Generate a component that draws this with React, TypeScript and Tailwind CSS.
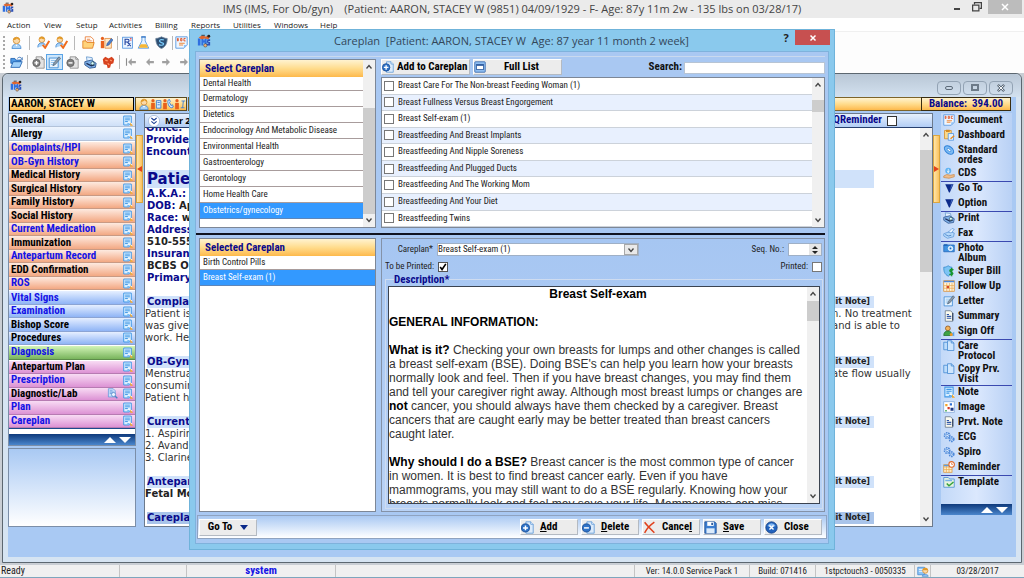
import React from "react";

/* ---------- icons ---------- */

type IconProps = { className?: string };

function Svg({ className = "size-3", children }: IconProps & { children: React.ReactNode }) {
  return (
    <svg viewBox="0 0 16 16" className={"shrink-0 " + className} fill="none" aria-hidden="true">
      {children}
    </svg>
  );
}

const Logo = ({ className }: IconProps) => (
  <Svg className={className}>
    <path d="M1 5h3v8H1zM5 5h2l1 3 1-3h2v8H9V9l-1 2-1-2v4H5z" fill="#2f6fe0" />
    <path d="M12 6h3v2h-2v1h2v4h-4v-2h2v-1h-2z" fill="#2b4fb8" />
    <path d="M2 4c3-3 6-2 8-1l3-2 2 2-2 3-4-1-4 1z" fill="#e0662e" />
    <circle cx="13.5" cy="2.5" r="1.6" fill="#222" />
    <circle cx="9.5" cy="13" r="1.9" fill="#f0b27a" stroke="#333" strokeWidth=".6" />
    <path d="M5 1.5h4" stroke="#333" />
  </Svg>
);

const Person = ({ className }: IconProps) => (
  <Svg className={className}>
    <path d="M2.500 15.500c0-4 2-5.500 5.500-5.500s5.500 1.500 5.500 5.500z" fill="#a9d2f7" stroke="#3f86d0" />
    <circle cx="8" cy="5.500" r="4" fill="#fbd9a8" stroke="#d08a2c" />
    <path d="M3.800 5C4 .5 12 .5 12.200 5 10 4.500 9 3.500 8.500 3 7.500 4.500 6 5 3.800 5z" fill="#e39a26" />
    <path d="M6.500 10.500 8 13l1.500-2.500z" fill="#fff" />
  </Svg>
);

const PersonCheck = ({ className }: IconProps) => (
  <Svg className={className}>
    <circle cx="6" cy="4.500" r="3.500" fill="#fbd9a8" stroke="#d08a2c" />
    <path d="M2.700 4C3 0 9 0 9.300 4 7 4 6 3 6 3z" fill="#e39a26" />
    <path d="M1 14c0-4 2-5.500 5-5.500s4 1.500 4 3" fill="#a9d2f7" stroke="#3f86d0" />
    <path d="m7 11 3 3.500L15 6" stroke="#ef6c1d" strokeWidth="2.400" />
  </Svg>
);

const Folder = ({ className }: IconProps) => (
  <Svg className={className}>
    <path d="M4 1h7l3 3v7H4z" fill="#fff" stroke="#e8752a" />
    <path d="M6 4h4M6 6h6" stroke="#e8752a" />
    <path d="M1 6h4l1 2h9l-2 7H1z" fill="#ffd37a" stroke="#e07a1c" />
  </Svg>
);

const BlueFolder = ({ className }: IconProps) => (
  <Svg className={className}>
    <path d="M1 3h5l1 2h6v4H1z" fill="#4f9ae6" stroke="#1d5fae" />
    <path d="M1 14 4 7h11l-3 7z" fill="#9fd0fa" stroke="#1d5fae" />
    <path d="M9 3c2-2 4-2 5 0l1-1v3h-3" stroke="#1d5fae" />
  </Svg>
);

const EditOrange = ({ className }: IconProps) => (
  <Svg className={className}>
    <circle cx="3" cy="3" r="2" fill="#e8601c" />
    <path d="M1 6h4v9H1z" fill="#e8601c" />
    <path d="M6 3h8v12H6z" fill="#ffe9c9" stroke="#e08a3c" />
    <path d="m8 12 1-3 5-6 2 2-5 6z" fill="#4d7fc9" stroke="#274f94" strokeWidth=".7" />
  </Svg>
);

const Rx = ({ className }: IconProps) => (
  <Svg className={className}>
    <rect x="2" y="1.500" width="12" height="13.500" fill="#eaf4ff" stroke="#4a8fdd" />
    <path d="M5 11V4h3c2.500 0 2.500 3.500 0 3.500H5M8 7.500l4 5M11.500 9 8 12.500" stroke="#1f3f9c" strokeWidth="1.300" />
    <path d="M11 3h2M11 5h2" stroke="#d33" />
  </Svg>
);

const Flask = ({ className }: IconProps) => (
  <Svg className={className}>
    <path d="M6 1h4v5l4.500 9h-13L6 6z" fill="#e6f3ff" stroke="#4a8fdd" />
    <path d="M4.500 10h7l2.300 4.500H2.200z" fill="#f7b733" />
    <path d="M5 1.200h6" stroke="#2f6fbf" strokeWidth="1.400" />
  </Svg>
);

const Shield = ({ className }: IconProps) => (
  <Svg className={className}>
    <path d="M1 3c3 0 5-1 7-2 2 1 4 2 7 2 0 6-2 10-7 12.500C3 13 1 9 1 3z" fill="#2d4f74" stroke="#6c8299" />
    <path d="M11 5C8 3.500 4.500 5 6 7s5 1 4.500 3S6 11.500 5 10.500" stroke="#7fd0ff" strokeWidth="1.500" />
  </Svg>
);

const DocIcon = ({ className }: IconProps) => (
  <Svg className={className}>
    <path d="M1 1h14v10l-4 4H1z" fill="#eef6ff" stroke="#4a8fdd" />
    <path d="M15 11h-4v4z" fill="#8fc0f5" />
    <path d="M3 3v3M3 3h1v3H3M7 3v3M7 3h1.500v3H7M13 3h-2v3h2" stroke="#e0552a" strokeWidth="1.200" />
    <path d="M5 9h7M5 11h5" stroke="#f08a3c" strokeWidth="1.300" />
  </Svg>
);

const NoteIcon = ({ className }: IconProps) => (
  <Svg className={className}>
    <path d="M2.500 1.500h11v10l-3 3h-8z" fill="#d9efff" stroke="#3f97e6" strokeWidth="1.400" />
    <path d="M4.500 4.500h7M4.500 7h7M4.500 9.500h4" stroke="#3f97e6" strokeWidth="1.400" />
    <path d="m9 12 5.500 1.500" stroke="#fff" strokeWidth="3" />
    <path d="M8 12.500 13 14" stroke="#54a7ee" strokeWidth="1.800" />
    <path d="M12 11 16 15.500h-4z" fill="#f4a728" />
  </Svg>
);

const DocSearch = ({ className }: IconProps) => (
  <Svg className={className}>
    <path d="M2 1h7l3 3v9H2z" fill="#c6defa" stroke="#5b92d6" />
    <path d="M4 4h4M4 6h6M4 8h3" stroke="#5b92d6" />
    <circle cx="9.500" cy="9.500" r="3" fill="#e9f4ff" stroke="#4a7fc4" />
    <path d="m12 12 3 3" stroke="#4a7fc4" strokeWidth="2" />
  </Svg>
);

const GrayDoc = ({ className, plus }: IconProps & { plus?: boolean }) => (
  <Svg className={className}>
    <path d="M5 1h7l3 3v11H5z" fill="#e3e3e3" stroke="#8a8a8a" />
    <path d="M12 1v3h3" stroke="#8a8a8a" />
    <circle cx="5.500" cy="8.500" r="4.500" fill="#7e7e7e" stroke="#5f5f5f" />
    <path d={plus ? "M3 8.500h5M5.500 6v5" : "M3 8.500h5"} stroke="#fff" strokeWidth="1.700" />
  </Svg>
);

const EditBlue = ({ className }: IconProps) => (
  <Svg className={className}>
    <path d="M1.500 2.500h11v12h-11z" fill="#eaf5ff" stroke="#2f82d2" />
    <path d="M3.500 5.500h6M3.500 8h4M3.500 10.500h3" stroke="#7bb6ea" />
    <path d="m6 12 1.200-3.500L13.500 1l2 2L9 10.500z" fill="#8b9aaa" stroke="#3f5870" strokeWidth=".8" />
  </Svg>
);

const Printer = ({ className }: IconProps) => (
  <Svg className={className}>
    <path d="m3 1 7 1 1 5-7 1z" fill="#e4f1ff" stroke="#6699cc" />
    <path d="m1 7 8-2 6 4-1 5-7 1-6-4z" fill="#7fb0e8" stroke="#284f88" />
    <path d="m3 9 6 3 4-1" stroke="#1d2f57" strokeWidth="1.600" />
    <circle cx="10.500" cy="9" r="2" fill="#dff" stroke="#244" strokeWidth=".8" />
  </Svg>
);

const Fax = ({ className }: IconProps) => (
  <Svg className={className}>
    <path d="m1 9 8-3 6 2-1 5-8 2-5-3z" fill="#b7dafb" stroke="#5b96d8" />
    <path d="m7 7 5-5 3 1-4 5z" fill="#eef7ff" stroke="#5b96d8" />
    <path d="m3 10 4 2 4-1" stroke="#3974bd" />
  </Svg>
);

const RedMark = ({ className }: IconProps) => (
  <Svg className={className}>
    <path d="M1 4 4 1l4 2 4-2 3 3-1 5-3 1-1 4-3 1-1-4-4-1z" fill="#d7431f" />
    <path d="m4 5 3 1M10 5l2 1M7 9l2 2" stroke="#ff9a70" strokeWidth="1.500" />
  </Svg>
);

const GrayArrow = ({ className, bar, flip }: IconProps & { bar?: boolean; flip?: boolean }) => (
  <Svg className={className}>
    <g transform={flip ? "matrix(-1 0 0 1 16 0)" : undefined}>
      <path d="M4 8 9 3v3.500h5.500v3H9V13z" fill="#a0a0a0" />
      {bar && <path d="M2 3v10" stroke="#8d8d8d" strokeWidth="1.500" />}
    </g>
  </Svg>
);

const Clipboard = ({ className }: IconProps) => (
  <Svg className={className}>
    <path d="M2 2h9v11H2z" fill="#fbd98a" stroke="#d58a20" />
    <path d="M7 6h7v9H7z" fill="#e3f1ff" stroke="#4a8fdd" />
    <path d="M4 1h5v3H4z" fill="#d58a20" />
    <path d="m10 13 5-4" stroke="#e88a20" strokeWidth="2" />
  </Svg>
);

const Ring = ({ className }: IconProps) => (
  <Svg className={className}>
    <ellipse cx="8" cy="8" rx="7" ry="4.500" transform="rotate(40 8 8)" fill="#7dbcf5" stroke="#3585da" strokeWidth="1.600" />
    <ellipse cx="8" cy="8" rx="3" ry="1.500" transform="rotate(40 8 8)" fill="#fff" stroke="#3585da" />
  </Svg>
);

const Cds = ({ className }: IconProps) => (
  <Svg className={className}>
    <circle cx="7" cy="5" r="4" fill="#5eb2f2" />
    <path d="M7 2.500v5M5.500 5 7 7.500 8.500 5" stroke="#fff" />
    <path d="m1 12 4-2 5 1 5-1v3l-7 2-7-1z" fill="#eebd8b" stroke="#c98b50" />
  </Svg>
);

const DownTri = ({ className }: IconProps) => (
  <Svg className={className}>
    <path d="M3 3h11L9 14H8z" fill="#0b2a8a" />
    <path d="M11 4h2l-4 8z" fill="#4468bd" />
  </Svg>
);

const Camera = ({ className }: IconProps) => (
  <Svg className={className}>
    <path d="M1 4h14v9H1z" fill="#3f93e2" stroke="#1f63b5" />
    <path d="M1 3h5v2H1z" fill="#1f63b5" />
    <circle cx="10" cy="8.500" r="3" fill="#cde8ff" stroke="#fff" />
    <circle cx="10" cy="8.500" r="1.200" fill="#1f63b5" />
  </Svg>
);

const SuperBill = ({ className }: IconProps) => (
  <Svg className={className}>
    <path d="M1 3c3 0 4-1 6-2 1 1 3 2 5 2 0 6-1 9-5 12-5-3-6-6-6-12z" fill="#7cc4f4" stroke="#2f86c8" />
    <path d="M14 6.500c-5-2-6 2-3 3s3 4-2.500 3M11.500 4v11" stroke="#17952f" strokeWidth="2" />
  </Svg>
);

const CalendarGrid = ({ className }: IconProps) => (
  <Svg className={className}>
    <rect x="1" y="1" width="14" height="14" fill="#fff4dc" stroke="#d98a2b" />
    <path d="M1 1h14v2H1z" fill="#4a86d8" />
    <path d="M1 7.500h14M1 11h14M5 4v11M8.500 4v11M12 4v11" stroke="#eaa850" />
    <path d="M5 8h3v3H5z" fill="#d4442a" />
  </Svg>
);

const SummaryIcon = ({ className }: IconProps) => (
  <Svg className={className}>
    <path d="M3 1h7l3 3v11H3z" fill="#fbfbef" stroke="#5f6f80" />
    <path d="M5 6h3M5 8.500h6M5 11h6" stroke="#2e55a8" strokeWidth="1.400" />
    <path d="M13 4v10" stroke="#2c3b55" strokeWidth="1.500" />
  </Svg>
);

const SignOff = ({ className }: IconProps) => (
  <Svg className={className}>
    <circle cx="6.500" cy="4.500" r="3.200" fill="#f2b35c" stroke="#8a4f14" />
    <path d="M1 14c0-4 2-6 5.500-6S12 10 12 14z" fill="#3fa345" stroke="#1d6f2a" />
    <path d="m9 13 6-4v6z" fill="#5aa7f0" />
    <circle cx="11" cy="12.500" r="2" fill="#f39a26" />
  </Svg>
);

const CopyIcon = ({ className }: IconProps) => (
  <Svg className={className}>
    <path d="M1 3h4l2 2v8H1z" fill="#bcdcfb" stroke="#3f86d0" />
    <path d="M6 1h5l3.500 3v10H6z" fill="#cfe6fd" stroke="#3f86d0" />
    <path d="M11 1v3h3.500" stroke="#3f86d0" />
  </Svg>
);

const ImageIcon = ({ className }: IconProps) => (
  <Svg className={className}>
    <rect x="1" y="1" width="14" height="14" fill="#fff" stroke="#7fa6d8" />
    <path d="M3 4h3v3H3z" fill="#f4a428" />
    <path d="M9 3h3v3H9z" fill="#2e6fd4" />
    <path d="M6 8h3v3H6z" fill="#d43a2a" />
    <path d="M10 9h4v4h-4z" fill="#1f3a86" />
    <path d="M3 12h2v2H3z" fill="#3aa545" />
  </Svg>
);

const Gears = ({ className }: IconProps) => (
  <Svg className={className}>
    <circle cx="5.500" cy="6" r="3.600" fill="#cfe4fb" stroke="#4a86d8" strokeWidth="2" strokeDasharray="2 1" />
    <circle cx="5.500" cy="6" r="1.500" fill="#fff" stroke="#4a86d8" />
    <circle cx="11.500" cy="11" r="3" fill="#cfe4fb" stroke="#4a86d8" strokeWidth="2" strokeDasharray="2 1" />
    <circle cx="11.500" cy="11" r="1.200" fill="#fff" stroke="#4a86d8" />
  </Svg>
);

const ReminderIcon = ({ className }: IconProps) => (
  <Svg className={className}>
    <rect x="1" y="5" width="11" height="10" fill="#fff2d0" stroke="#e0952e" />
    <path d="M1 8h11M1 11.500h11M4.500 5v10M8 5v10" stroke="#eaa850" />
    <path d="M1 5h8v2H1z" fill="#5a9ae0" />
    <circle cx="11.500" cy="4.500" r="3.700" fill="#fff" stroke="#e2692a" strokeWidth="1.400" />
    <path d="M11.500 2.500v2h1.800" stroke="#e2692a" />
  </Svg>
);

const TemplateIcon = ({ className }: IconProps) => (
  <Svg className={className}>
    <path d="M1 2h6l2 2h6v11H1z" fill="#e6f3df" stroke="#3f86d0" />
    <path d="M3 6h9" stroke="#76b2e8" strokeWidth="2" />
    <path d="m5 10 3 3 6-5" stroke="#36a23c" strokeWidth="2" />
  </Svg>
);

const PageBadge = ({ className, plus }: IconProps & { plus?: boolean }) => (
  <Svg className={className}>
    <path d="M6 1h6l3 3v11H6z" fill="#dcebfb" stroke="#5a96d6" />
    <path d="M12 1v3h3" fill="#fff" stroke="#5a96d6" />
    <circle cx="5.500" cy="8.500" r="5" fill="#2f73c8" stroke="#174a91" />
    <path d={plus ? "M2.500 8.500h6M5.500 5.500v6" : "M2.500 8.500h6"} stroke="#fff" strokeWidth="1.800" />
  </Svg>
);

const WindowIcon = ({ className }: IconProps) => (
  <Svg className={className}>
    <rect x="1" y="1" width="14" height="14" rx="1" fill="#8fbdf0" stroke="#2a5fa8" />
    <rect x="3.500" y="4.500" width="9" height="7" fill="#fff" stroke="#1f4f96" />
    <path d="M3.500 5.500h9" stroke="#1f4f96" strokeWidth="1.800" />
  </Svg>
);

const RedX = ({ className }: IconProps) => (
  <Svg className={className}>
    <path d="M2 1.500c3 4 7 8 12 13M14 1.500C9 5 5 9 2 14.500" stroke="#e0401c" strokeWidth="1.800" />
  </Svg>
);

const Disk = ({ className }: IconProps) => (
  <Svg className={className}>
    <path d="M1 1h12l2 2v12H1z" fill="#3b7dd0" stroke="#1f4f96" />
    <path d="M4 1h8v5H4z" fill="#fff" />
    <path d="M3 9h10v6H3z" fill="#dcebfb" />
    <path d="M9 2h2v3H9z" fill="#1f4f96" />
  </Svg>
);

const CloseBall = ({ className }: IconProps) => (
  <Svg className={className}>
    <circle cx="8" cy="8" r="7" fill="#2263bd" stroke="#143f85" />
    <path d="M3 6a5.500 5.500 0 0 1 10 0c-3 1.500-7 1.500-10 0z" fill="#82b6f0" />
    <path d="m5.500 5.500 5 5M10.500 5.500l-5 5" stroke="#fff" strokeWidth="1.800" />
  </Svg>
);

const UserCard = ({ className }: IconProps) => (
  <Svg className={className}>
    <path d="M1 3h9v10H1z" fill="#8fc4f6" stroke="#3f86d0" />
    <path d="M2.500 6h6M2.500 8.500h6" stroke="#fff" />
    <circle cx="11" cy="7.500" r="3.500" fill="#fbd9a8" stroke="#d08a2c" />
    <path d="M7.500 7C8 3 14 3 14.500 7z" fill="#e39a26" />
    <path d="M7 15c0-3 8-3 8 0z" fill="#a9d2f7" stroke="#3f86d0" />
  </Svg>
);

const ContactIcon = ({ className, mark }: IconProps & { mark: string }) => (
  <Svg className={className}>
    <circle cx="4" cy="3.500" r="2.200" fill="#e8601c" />
    <path d="M1.500 6.500h5V15h-5z" fill="#e8601c" />
    <path d={mark} fill="#d6ebff" stroke="#3f7fd0" strokeWidth="1.200" />
  </Svg>
);

const Chevron = ({ up, className = "size-2" }: IconProps & { up?: boolean }) => (
  <Svg className={className}>
    <path d={up ? "m3 11 5-6 5 6" : "m3 5 5 6 5-6"} stroke="#444" strokeWidth="2.600" />
  </Svg>
);

const PagerBar = () => (
  <div className="flex h-[11px] items-center justify-end gap-[3px] bg-linear-to-b from-[#0f3a7c] to-[#4a86cc] pr-1">
    <button aria-label="Scroll up" className="flex">
      <svg viewBox="0 0 12 6" className="h-1.5 w-3"><path d="M6 0 12 6H0z" fill="#fff" /></svg>
    </button>
    <button aria-label="Scroll down" className="flex">
      <svg viewBox="0 0 12 6" className="h-1.5 w-3"><path d="M0 0h12L6 6z" fill="#fff" /></svg>
    </button>
  </div>
);

/* ---------- shared pieces ---------- */

function ScrollBar({ thumb }: { thumb: string }) {
  return (
    <div className="flex w-3 shrink-0 flex-col items-center bg-[#f0f0f0]">
      <span className="flex h-3.5 items-center"><Chevron up /></span>
      <div className="w-full flex-1">
        <div className={"w-full bg-[#cdcdcd] " + thumb} />
      </div>
      <span className="flex h-3.5 items-center"><Chevron /></span>
    </div>
  );
}

const gold = "bg-linear-to-b from-[#fff3d0] via-[#ffdc8c] to-[#fdb94a]";
const btn = "flex items-center border border-[#b4bac2] border-t-white border-l-white bg-[#ececec] font-bold text-black text-[11px] whitespace-nowrap";

/* ---------- background window ---------- */

const menus: [string, string][] = [
  ["Action", "w-[37px]"], ["View", "w-8"], ["Setup", "w-[33px]"], ["Activities", "w-[46px]"], ["Billing", "w-9"],
  ["Reports", "w-[42px]"], ["Utilities", "w-[41px]"], ["Windows", "w-[46px]"], ["Help", "w-7"],
];

const Sep = ({ tight }: { tight?: boolean }) => <span className={"h-3.5 w-px bg-[#b8b8b8] " + (tight ? "mx-0.5" : "mx-1")} />;
const Grip = () => <span className="mr-0.5 h-3.5 border-l-2 border-dotted border-[#a8a8a8]" />;

const tone = {
  pale: "from-[#eef5fe] to-[#cfe0f8] border-[#b3c3da]",
  orange: "from-[#fdeae0] to-[#f2a883] border-[#c99a84]",
  blue: "from-[#e6efff] to-[#8fb4f5] border-[#8ba4d4]",
  green: "from-[#d3f5b8] to-[#78b45c] border-[#5d8c4a]",
  pink: "from-[#f8dcf4] to-[#dc92d4] border-[#b77bb2]",
};

type Tone = keyof typeof tone;
const chart: { label: string; t: Tone; link?: boolean; first?: boolean; extra?: boolean }[] = [
  { label: "General", t: "pale" },
  { label: "Allergy", t: "pale" },
  { label: "Complaints/HPI", t: "orange", link: true, first: true },
  { label: "OB-Gyn History", t: "orange", link: true },
  { label: "Medical History", t: "orange" },
  { label: "Surgical History", t: "orange" },
  { label: "Family History", t: "orange" },
  { label: "Social History", t: "orange" },
  { label: "Current Medication", t: "orange", link: true },
  { label: "Immunization", t: "orange" },
  { label: "Antepartum Record", t: "orange", link: true },
  { label: "EDD Confirmation", t: "orange" },
  { label: "ROS", t: "orange", link: true },
  { label: "Vital Signs", t: "blue", link: true, first: true },
  { label: "Examination", t: "blue", link: true },
  { label: "Bishop Score", t: "blue" },
  { label: "Procedures", t: "blue" },
  { label: "Diagnosis", t: "green", link: true, first: true },
  { label: "Antepartum Plan", t: "pink", first: true },
  { label: "Prescription", t: "pink", link: true },
  { label: "Diagnostic/Lab", t: "pink", extra: true },
  { label: "Plan", t: "pink", link: true },
  { label: "Careplan", t: "pink", link: true },
];

const tools: { label: string; Icon: React.FC<IconProps>; line?: boolean; tall?: boolean }[] = [
  { label: "Document", Icon: DocIcon },
  { label: "Dashboard", Icon: Clipboard },
  { label: "Standard ordes", Icon: Ring, tall: true },
  { label: "CDS", Icon: Cds },
  { label: "Go To", Icon: DownTri, line: true },
  { label: "Option", Icon: DownTri },
  { label: "Print", Icon: Printer, line: true },
  { label: "Fax", Icon: Fax },
  { label: "Photo Album", Icon: Camera, line: true, tall: true },
  { label: "Super Bill", Icon: SuperBill },
  { label: "Follow Up", Icon: CalendarGrid },
  { label: "Letter", Icon: EditBlue },
  { label: "Summary", Icon: SummaryIcon },
  { label: "Sign Off", Icon: SignOff },
  { label: "Care Protocol", Icon: CopyIcon, line: true, tall: true },
  { label: "Copy Prv. Visit", Icon: CopyIcon, tall: true },
  { label: "Note", Icon: NoteIcon, line: true },
  { label: "Image", Icon: ImageIcon },
  { label: "Prvt. Note", Icon: SummaryIcon },
  { label: "ECG", Icon: Gears },
  { label: "Spiro", Icon: Gears },
  { label: "Reminder", Icon: ReminderIcon },
  { label: "Template", Icon: TemplateIcon, line: true },
];

function SplitTab({ right }: { right?: boolean }) {
  return (
    <div className="w-2 shrink-0 pt-[22px]">
      <button
        aria-label={right ? "Collapse tools" : "Collapse chart"}
        className="flex h-[68px] w-[7px] items-center border border-[#dba640] bg-linear-to-r from-[#ffe6a8] to-[#fbc25c]"
      >
        <svg viewBox="0 0 5 6" className="h-1.5 w-[5px]">
          <path d={right ? "M0 0 5 3 0 6z" : "M5 0 0 3l5 3z"} fill="#e2431c" />
        </svg>
      </button>
    </div>
  );
}

function Band({ children, active }: { children: string; active?: boolean }) {
  return (
    <div className={"mr-[46px] ml-0.5 flex h-3 items-center justify-between pr-1 " + (active ? "bg-[#a9c4ea]" : "bg-[#d0e2fa]")}>
      <h3 className="font-bold text-[#0a0a8c]">{children}</h3>
      <button className="text-[8px] font-bold text-[#222]">[Edit Note]</button>
    </div>
  );
}

function Line({ left, right = "" }: { left: string; right?: string }) {
  return (
    <div className="flex h-3 whitespace-nowrap">
      <p className="flex-1">{left}</p>
      <p className="w-[88px]">{right}</p>
    </div>
  );
}

function ChartDocument() {
  const key = "font-bold text-[#0a0a8c]";
  return (
    <div className="-mt-1.5 flex-1 font-['DejaVu_Sans','Liberation_Sans',sans-serif] text-[10px] leading-3 font-normal text-[#333]">
      <div className="pl-px">
        <p className={key}>Office:</p>
        <p className={key}>Provider:</p>
        <p className={key}>Encounter:</p>
      </div>
      <h2 className="mt-3 mr-[46px] ml-0.5 h-[18px] bg-[#d0e2fa] text-[15px] leading-[18px] font-bold text-[#0a0a8c]">Patient</h2>
      <div className="pl-0.5 font-bold text-[#222]">
        <p><span className={key}>A.K.A.:</span> L</p>
        <p><span className={key}>DOB:</span> Apr</p>
        <p><span className={key}>Race:</span> white</p>
        <p className={key}>Address:</p>
        <p>510-555</p>
        <p className={key}>Insurance:</p>
        <p>BCBS OF</p>
        <p className={key}>Primary</p>
      </div>
      <div className="mt-3">
        <Band>Complaints</Band>
        <Line left="Patient is" right="n. No treatment" />
        <Line left="was given" right="and is able to" />
        <Line left="work. Her" />
      </div>
      <div className="mt-3">
        <Band>OB-Gyn</Band>
        <Line left="Menstrual" right="ate flow usually" />
        <Line left="consuming" />
        <Line left="Patient has" />
      </div>
      <div className="mt-3">
        <Band>Current</Band>
        <Line left="1. Aspirin" />
        <Line left="2. Avandia" />
        <Line left="3. Clarinex" />
      </div>
      <div className="mt-3">
        <Band>Antepartum</Band>
        <p className="font-bold text-[#222]">Fetal Mov</p>
      </div>
      <div className="mt-3">
        <Band active>Careplan</Band>
      </div>
    </div>
  );
}

function PatientWindow() {
  return (
    <section className="mx-0.5 flex flex-1 flex-col rounded-t-md border border-[#5c6770] bg-[#d6e4f2] px-[5px] pb-[5px]">
      <div className="-mx-[5px] flex h-[23px] items-center justify-between rounded-t-md bg-linear-to-b from-[#b9c7d6] to-[#d3e1ef] pr-2 pl-[7px]">
        <Logo className="size-3" />
        <div className="flex gap-0.5 pt-1">
          <button aria-label="Minimize chart" className="flex h-3.5 w-6 items-center justify-center rounded-sm border border-[#93a3b4]">
            <span className="h-1 w-2 rounded-sm border border-[#5d6b79]" />
          </button>
          <button aria-label="Restore chart" className="flex h-3.5 w-6 items-center justify-center rounded-sm border border-[#93a3b4]">
            <span className="h-[7px] w-2 border-2 border-[#6d7b89]" />
          </button>
          <button aria-label="Close chart" className="flex h-3.5 w-6 items-center justify-center rounded-sm border border-[#93a3b4]">
            <Svg className="size-2.5"><path d="m3 3 10 10M13 3 3 13" stroke="#5d6b79" strokeWidth="4" /><path d="m4 4 8 8M12 4l-8 8" stroke="#fff" strokeWidth="1.500" /></Svg>
          </button>
        </div>
      </div>

      <div className="flex flex-1 flex-col bg-[#a9c9f3] text-[11px] font-bold">
        <div className="flex h-3.5 pr-[5px] pl-px">
          <div className={"w-[125px] border border-black pl-px leading-[11px] text-black " + gold}>AARON, STACEY W</div>
          <div className={"ml-px flex w-[52px] items-center justify-between border border-[#5a4a20] px-0.5 " + gold}>
            <Person className="size-3" />
            <ContactIcon className="size-3" mark="M8.500 3.500h6v10h-6zM10 6h3M10 9h3" />
            <ContactIcon className="size-3" mark="M8 3l2-1 1 3-1 1 2 4 2-1 1 3-2 1C9 13 7 6 8 3z" />
            <ContactIcon className="size-3" mark="M10 4h5M12.500 4l-1 9M9 13h5" />
          </div>
          <div className={"ml-px flex-1 border border-r-0 border-[#7d642a] " + gold} />
          <div className={"w-[90px] border border-[#3a2d10] text-center leading-[11px] whitespace-pre text-[#0a0a8c] " + gold}>{"Balance:  394.00"}</div>
        </div>

        <div className="mt-0.5 flex flex-1 pr-1 pb-[30px]">
          <aside className="flex w-32 shrink-0 flex-col">
            <nav className="flex flex-col border border-[#7b8ea8] bg-white">
              <ul className="flex h-[314px] flex-col">
                {chart.map(({ label, t, link, first, extra }) => (
                  <li key={label} className={"flex min-h-0 flex-1 border-b bg-linear-to-b " + tone[t] + (first ? " mt-px" : "")}>
                    <button className={"flex w-full items-center gap-1 pr-0.5 pl-0.5 text-left leading-3 " + (link ? "text-[#1414e6]" : "text-black")}>
                      <span className="flex-1">{label}</span>
                      {extra && <DocSearch className="size-[11px]" />}
                      <NoteIcon className="size-[11px]" />
                    </button>
                  </li>
                ))}
              </ul>
              <div className="h-1.5 border-t border-[#1d4a8c]" />
              <PagerBar />
            </nav>
            <div className="mt-0.5 min-h-[78px] flex-1 border border-[#7b8ea8] bg-linear-to-b from-[#a9c9f3] to-white" />
          </aside>

          <SplitTab />

          <main className="flex min-w-0 flex-1 flex-col border border-[#6c7a8c] bg-white">
            <header className="z-0 flex h-[13px] items-center gap-[5px] bg-linear-to-b from-[#e6f0fd] to-[#b2cdf5] pl-[3px] shadow-[0_1px_0_#27406f]">
              <Svg className="size-3">
                <circle cx="8" cy="8" r="7.500" fill="#fff" stroke="#9db6d8" />
                <path d="m4.500 4 3.500 3 3.500-3M4.500 8.500 8 11.500l3.500-3" stroke="#1b3f94" strokeWidth="1.500" />
              </Svg>
              <span className="flex-1 font-['Open_Sans','Liberation_Sans',sans-serif] text-[9px] whitespace-nowrap text-black">Mar 28</span>
              <label className="mr-[35px] flex items-center gap-[5px] text-[#0a0a8c]">
                QReminder
                <input type="checkbox" className="size-2.5 appearance-none border border-[#333] bg-white" />
              </label>
            </header>
            <div className="mt-px flex h-[397px] flex-auto overflow-hidden">
              <ChartDocument />
              <ScrollBar thumb="mt-2 h-[122px]" />
            </div>
          </main>

          <SplitTab right />

          <aside className="flex w-[71px] shrink-0 flex-col self-start bg-linear-to-r from-[#c3d9f8] via-[#dbe8fd] to-[#b9d1f5]">
            <ul className="pb-[14px]">
              {tools.map(({ label, Icon, line, tall }) => (
                <li key={label} className={(tall ? "h-[23px]" : "h-[15px]") + " border-t " + (line ? "border-[#3a49b0]" : "border-transparent")}>
                  <button className={"flex w-full items-start gap-[3px] pl-0.5 text-left leading-[10px] text-[#111]" + (tall ? "" : " whitespace-nowrap")}>
                    <Icon className="size-3" />
                    <span className="flex-1 pt-px">{label}</span>
                  </button>
                </li>
              ))}
            </ul>
            <PagerBar />
          </aside>
        </div>
      </div>
    </section>
  );
}

/* ---------- careplan dialog ---------- */

const categories = [
  "Dental Health", "Dermatology", "Dietetics", "Endocrinology And Metabolic Disease", "Environmental Health",
  "Gastroenterology", "Gerontology", "Home Health Care", "Obstetrics/gynecology",
];

const plans = [
  "Breast Care For The Non-breast Feeding Woman (1)", "Breast Fullness Versus Breast Engorgement", "Breast Self-exam (1)",
  "Breastfeeding And Breast Implants", "Breastfeeding And Nipple Soreness", "Breastfeeding And Plugged Ducts",
  "Breastfeeding And The Working Mom", "Breastfeeding And Your Diet", "Breastfeeding Twins",
];

function ListRow({ label, active, first }: { label: string; active?: boolean; first?: boolean }) {
  return (
    <li>
      <button
        className={
          "flex w-full items-center border-b pl-[3px] text-left whitespace-nowrap " +
          (first ? "h-3.5 " : "h-4 ") +
          (active ? "border-[#5f86b8] bg-[#3399ff] text-white" : "border-[#a89c9c] text-[#222]")
        }
      >
        {label}
      </button>
    </li>
  );
}

const GoldHeader = ({ children }: { children: string }) => (
  <h2 className={"h-[17px] pl-[5px] text-[11px] leading-[17px] font-bold text-[#0a0a8c] " + gold}>{children}</h2>
);

function CareplanDialog() {
  const action = btn + " h-4 w-[58px] gap-1.5";
  return (
    <div
      role="dialog"
      aria-label="Careplan"
      className="absolute inset-x-0 top-[29px] mx-auto w-[646px] border border-[#6fb3da] bg-[#8ac9ed] px-[5px] pb-[5px] text-[9px] text-[#222]"
    >
      <div className="-mr-px flex h-[21px] items-start">
        <Logo className="mt-1 ml-0.5 size-3.5" />
        <h1 className="flex-1 pl-[35px] text-center font-['Open_Sans','Noto_Sans',sans-serif] text-[11px] leading-[22px] whitespace-pre text-[#33475a]">
          {"Careplan  [Patient: AARON, STACEY W  Age: 87 year 11 month 2 week]"}
        </h1>
        <button aria-label="Help" className="w-[18px] font-['Open_Sans',sans-serif] text-[11px] leading-4 font-bold text-[#222]">?</button>
        <button aria-label="Close dialog" className="flex h-[15px] w-[35px] items-center justify-center bg-[#c75050]">
          <Svg className="size-2"><path d="m3 3 10 10M13 3 3 13" stroke="#fff" strokeWidth="3" /></Svg>
        </button>
      </div>

      <div className="border border-[#7fb2dc] bg-[#a9c8f2] px-[3px] pb-1">
        <div className="mt-1 border-t border-[#c9d9ee] pt-0.5">
          <div className="flex gap-[5px]">
            <div className="flex h-[169px] w-[177px] shrink-0 border border-[#7d8796] bg-white">
              <div className="min-w-0 flex-1">
                <GoldHeader>Select Careplan</GoldHeader>
                <ul>
                  {categories.map((c, i) => (
                    <ListRow key={c} label={c} first={i === 0} active={i === categories.length - 1} />
                  ))}
                </ul>
              </div>
              <ScrollBar thumb="mt-[34px] h-[106px]" />
            </div>

            <div className="flex min-w-0 flex-1 flex-col">
              <div className="flex h-[18px] items-start gap-[3px]">
                <button className={btn + " h-4 w-[89px] gap-[3px]"}>
                  <PageBadge plus className="size-3" /> Add to Careplan
                </button>
                <button className={btn + " h-4 w-[89px]"}>
                  <WindowIcon className="size-3" /> <span className="flex-1 pr-1 text-center">Full List</span>
                </button>
                <label className="ml-auto flex items-center gap-0.5 text-[11px] leading-4 font-bold text-[#111]">
                  Search:
                  <input type="text" className="mt-0.5 h-3 w-[141px] border border-[#b7c4d4] bg-white px-1 text-[9px] font-normal" />
                </label>
              </div>
              <div className="flex h-[151px] border border-[#7d8796] bg-white">
                <ul className="flex flex-1 flex-col">
                  {plans.map((p, i) => (
                    <li key={p} className={"flex min-h-0 flex-1 border-b border-[#ccd2da] " + (i % 2 ? "bg-[#e8f0fe]" : "bg-white")}>
                      <label className="flex flex-1 items-center gap-1 pl-0.5">
                        <input type="checkbox" className="size-2.5 appearance-none border border-[#777] bg-white" />
                        {p}
                      </label>
                    </li>
                  ))}
                </ul>
                <ScrollBar thumb="mt-2 h-3" />
              </div>
            </div>
          </div>
        </div>

        <div className="-ml-[3px] mt-[5px] h-0.5 bg-[#10131f]" />

        <div className="mt-[3px] flex gap-[5px]">
          <div className="h-[274px] w-[177px] shrink-0 border border-[#7d8796] bg-white">
            <GoldHeader>Selected Careplan</GoldHeader>
            <ul>
              <ListRow label="Birth Control Pills" first />
              <ListRow label="Breast Self-exam (1)" active />
            </ul>
          </div>

          <form className="flex h-[274px] min-w-0 flex-1 flex-col border border-[#8492a8] bg-linear-to-b from-[#a6c6f2] to-[#b9d2f5] pr-px pl-[3px]" onSubmit={(e) => e.preventDefault()}>
            <div className="mt-1 flex h-[13px] items-center pr-px">
              <label htmlFor="careplan" className="w-12 text-right">Careplan*</label>
              <div className="ml-1 flex h-[13px] w-[202px] border border-[#9fb0c6] bg-white">
                <select id="careplan" className="min-w-0 flex-1 appearance-none text-[9px] leading-[11px]">
                  <option>Breast Self-exam (1)</option>
                </select>
                <span className="flex w-3.5 items-center justify-center border border-[#a8a8a8] bg-[#e9e9e9]"><Chevron /></span>
              </div>
              <label htmlFor="seq" className="ml-auto">Seq. No.:</label>
              <div className="ml-1 flex h-[13px] w-[34px] border border-[#9fb0c6] bg-white">
                <input id="seq" type="text" className="w-5 min-w-0" />
                <span className="flex flex-1 flex-col items-center justify-center gap-px bg-[#e6e6e6]">
                  <svg viewBox="0 0 6 8" className="h-2 w-1.5"><path d="M3 0 6 3H0zM0 5h6L3 8z" fill="#222" /></svg>
                </span>
              </div>
            </div>
            <div className="mt-[5px] flex h-3 items-center justify-between pr-px">
              <label className="flex items-center gap-1">
                To be Printed:
                <span className="relative flex">
                  <input type="checkbox" defaultChecked className="size-2.5 appearance-none border border-[#555] bg-white" />
                  <Svg className="pointer-events-none absolute inset-0 size-2.5"><path d="m3.500 8 3 4 6-9" stroke="#000" strokeWidth="2.600" /></Svg>
                </span>
              </label>
              <label className="flex items-center gap-1">
                Printed:
                <input type="checkbox" className="size-2.5 appearance-none border border-[#777] bg-white" />
              </label>
            </div>
            <fieldset className="min-w-0 border border-[#cfdcf0] px-0.5 pb-1">
              <legend className="ml-1.5 h-[13px] text-[11px] leading-[14px] font-bold text-[#0a0a8c]">Description*</legend>
              <div className="flex h-[218px] border border-[#3b4350] bg-white">
                <article className="min-w-0 flex-1 overflow-hidden font-['Liberation_Sans',sans-serif] text-[12px] leading-[14px] text-[#333]">
                  <h3 className="text-center font-bold text-black">Breast Self-exam</h3>
                  <h4 className="mt-3.5 font-bold text-black">GENERAL INFORMATION:</h4>
                  <p className="mt-3.5 whitespace-nowrap">
                    <b className="text-black">What is it?</b> Checking your own breasts for lumps and other changes is called<br />
                    a breast self-exam (BSE). Doing BSE's can help you learn how your breasts<br />
                    normally look and feel. Then if you have breast changes, you may find them<br />
                    and tell your caregiver right away. Although most breast lumps or changes are<br />
                    <b className="text-black">not</b> cancer, you should always have them checked by a caregiver. Breast<br />
                    cancers that are caught early may be better treated than breast cancers<br />
                    caught later.
                  </p>
                  <p className="mt-3.5 whitespace-nowrap">
                    <b className="text-black">Why should I do a BSE?</b> Breast cancer is the most common type of cancer<br />
                    in women. It is best to find breast cancer early. Even if you have<br />
                    mammograms, you may still want to do a BSE regularly. Knowing how your<br />
                    breasts normally look and feel may save your life. Mammograms can miss
                  </p>
                </article>
                <ScrollBar thumb="h-5" />
              </div>
            </fieldset>
          </form>
        </div>

        <div className="-mx-0.5 mt-[3px] flex h-6 items-center border border-[#8fa3c0] bg-linear-to-b from-[#a9c8f2] to-white pr-1 pl-px">
          <button className={btn + " h-[17px] w-[58px] justify-center gap-2"}>
            Go To
            <svg viewBox="0 0 8 5" className="h-[5px] w-2"><path d="M0 0h8L4 5z" fill="#0b2a8a" /></svg>
          </button>
          <div className="ml-auto flex gap-[3px]">
            <button className={action}><PageBadge plus className="size-[13px]" /><span><u>A</u>dd</span></button>
            <button className={action}><PageBadge className="size-[13px]" /><span><u>D</u>elete</span></button>
            <button className={action}><RedX className="size-[13px]" /><span>Cance<u>l</u></span></button>
            <button className={action}><Disk className="size-[13px]" /><span><u>S</u>ave</span></button>
            <button className={action}><CloseBall className="size-[13px]" /><span>Close</span></button>
          </div>
        </div>
      </div>
    </div>
  );
}

/* ---------- app shell ---------- */

export default function App() {
  const tool = "flex items-center justify-center w-[18px]";
  return (
    <div className="relative flex min-h-screen flex-col overflow-hidden bg-[#c9ced4] font-['Roboto_Condensed','Liberation_Sans',sans-serif]">
      <header className="flex h-[18px] items-start bg-[#ebebeb]">
        <Logo className="mt-0.5 ml-0.5 size-3" />
        <p className="flex-1 pl-14 text-center font-['Open_Sans','Noto_Sans',sans-serif] text-[11px] leading-[18px] whitespace-pre text-[#444]">
          {"IMS (IMS, For Ob/gyn)    (Patient: AARON, STACEY W (9851) 04/09/1929 - F- Age: 87y 11m 2w - 135 lbs on 03/28/17)"}
        </p>
        <button aria-label="Minimize" className="flex h-3.5 w-[18px] items-center"><span className="mt-1 h-0.5 w-1.5 bg-[#444]" /></button>
        <button aria-label="Restore" className="flex h-3.5 w-4 items-center">
          <Svg className="size-2.5"><path d="M4 4V1h11v9h-3" stroke="#444" strokeWidth="2" /><path d="M1 5h10v9H1z" stroke="#444" strokeWidth="2" /></Svg>
        </button>
        <button aria-label="Close" className="mr-0.5 flex h-3.5 w-[34px] items-center justify-center bg-[#bcbcbc]">
          <Svg className="size-2"><path d="m2 2 12 12M14 2 2 14" stroke="#fff" strokeWidth="3" /></Svg>
        </button>
      </header>

      <nav className="flex h-[13px] items-center bg-white pl-[7px] font-['Open_Sans','Noto_Sans',sans-serif] text-[8px] text-[#222]">
        {menus.map(([m, w]) => (
          <button key={m} className={"text-left " + w}>{m}</button>
        ))}
      </nav>

      <div className="flex h-[22px] items-center border-t border-[#f0f0f0] bg-[#fdfdfd] pl-[3px]">
        <Grip />
        <button aria-label="Patient" className={tool}><Person className="size-[13px]" /></button>
        <Sep />
        <button aria-label="Check in" className={tool}><PersonCheck className="size-[13px]" /></button>
        <button aria-label="Check out" className={tool}><PersonCheck className="size-[13px]" /></button>
        <Sep />
        <button aria-label="Chart" className={tool}><Folder className="size-[13px]" /></button>
        <button aria-label="Edit patient" className={tool}><EditOrange className="size-[13px]" /></button>
        <Sep tight />
        <button aria-label="Prescriptions" className="flex w-3.5 justify-center"><Rx className="size-[13px]" /></button>
        <button aria-label="Labs" className={tool}><Flask className="size-[13px]" /></button>
        <button aria-label="Security" className={tool}><Shield className="size-[13px]" /></button>
        <Sep tight />
        <button aria-label="Documents" className="flex"><DocIcon className="size-[13px]" /></button>
      </div>
      <div className="flex h-5 items-center bg-[#fdfdfd] pb-0.5 pl-[3px]">
        <Grip />
        <button aria-label="Open" className={tool}><BlueFolder className="size-[13px]" /></button>
        <Sep tight />
        <button aria-label="Add note" className="flex w-4 justify-center"><GrayDoc plus className="size-[13px]" /></button>
        <button aria-label="Edit note" className="flex h-4 w-[17px] items-center justify-center border border-[#5ba4e6] bg-[#cde6fb]"><EditBlue className="size-[13px]" /></button>
        <button aria-label="Remove note" className={tool}><GrayDoc className="size-[13px]" /></button>
        <button aria-label="Print" className={tool}><Printer className="size-[13px]" /></button>
        <button aria-label="Alerts" className={tool}><RedMark className="size-[13px]" /></button>
        <Sep tight />
        <button aria-label="First" className={tool}><GrayArrow bar className="size-3" /></button>
        <button aria-label="Previous" className={tool}><GrayArrow className="size-3" /></button>
        <button aria-label="Next" className={tool}><GrayArrow flip className="size-3" /></button>
        <button aria-label="Last" className={tool}><GrayArrow bar flip className="size-3" /></button>
      </div>

      <PatientWindow />

      <footer className="mt-0.5 flex h-[13px] items-center divide-x divide-[#c4c4c4] border-b border-[#7ea6bd] bg-[#f0f0f0] text-[9px] leading-3 whitespace-nowrap text-[#222]">
        <span className="w-[120px] pl-px text-[10px]">Ready</span>
        <span className="h-3 w-[67px]" />
        <span className="w-[149px] text-center text-[11px] font-bold text-[#1414e6]">system</span>
        <span className="h-3 flex-1" />
        <span className="w-[115px] text-center">Ver: 14.0.0 Service Pack 1</span>
        <span className="w-[66px] text-center">Build: 071416</span>
        <span className="w-[99px] text-center">1stpctouch3 - 0050335</span>
        <span className="flex w-4 justify-center"><UserCard className="size-3" /></span>
        <span className="w-[93px] text-center">03/28/2017</span>
      </footer>

      <CareplanDialog />
    </div>
  );
}
